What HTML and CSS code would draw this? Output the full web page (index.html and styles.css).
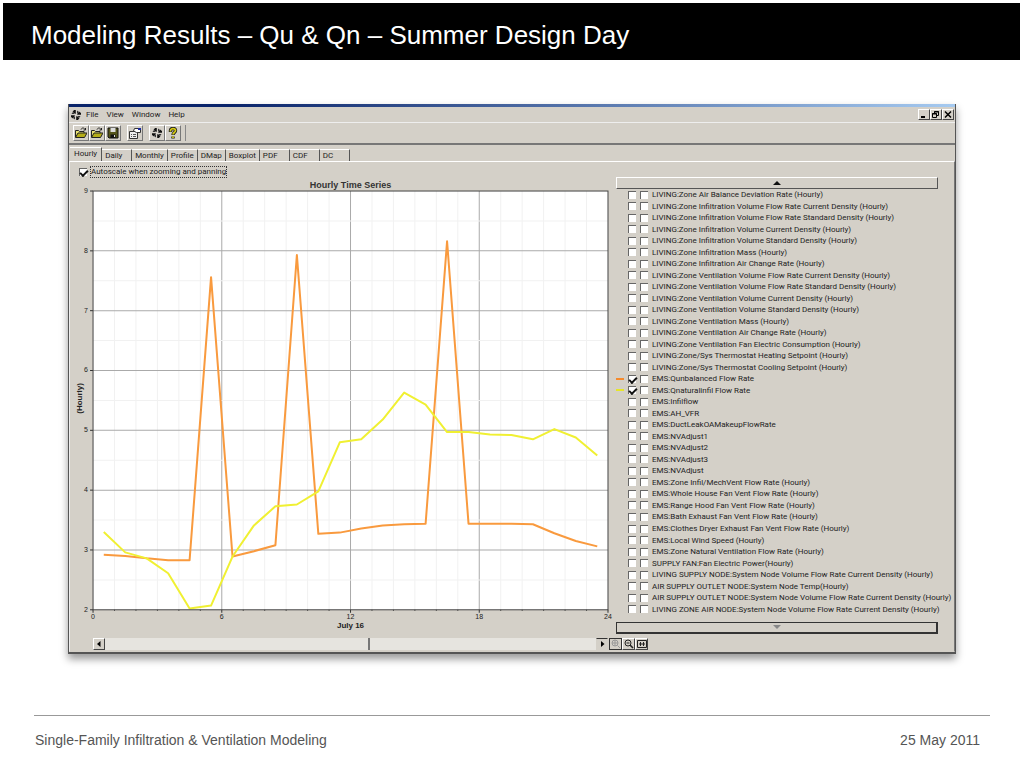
FILE: index.html
```
<!DOCTYPE html>
<html lang="en">
<head>
  <meta charset="UTF-8">
  <meta name="viewport" content="width=device-width, initial-scale=1.0">
  <title>Modeling Results</title>
  <link rel="stylesheet" href="styles.css">
</head>
<body>

<!-- shared icons -->
<svg class="defs" width="0" height="0" aria-hidden="true">
  <symbol id="logo" viewBox="0 0 12 12">
    <path d="M4 1h1.800v4L2.500 3zM11 4v1.800H7L9 2.500zM8 11H6.200V7l3.300 2zM1 8V6.200h4L3 9.500z" fill="#111"/>
    <path d="M7 1.500L9 3 7 5zM10.500 7L9 9 7 7zM5 10.500L3 9l2-2zM1.500 5L3 3l2 2z" fill="#333"/>
  </symbol>
  <symbol id="open" viewBox="0 0 12 12">
    <path d="M.5 10V3.500h3l1 1H9V6" fill="#e8e070" stroke="#222"/>
    <path d="M.5 10.500L3 6h9l-2.500 4.500z" fill="#b5ad18" stroke="#222"/>
    <path d="M6 2.500C7 .5 9 .5 10 2.500M10.500 1v2H8.500" fill="none" stroke="#222"/>
  </symbol>
</svg>

<header class="slide-title">
  <h1>Modeling Results – Qu &amp; Qn – Summer Design Day</h1>
</header>

<main class="window">
  <div class="title-strip"></div>

  <div class="menu-bar">
    <svg class="app-icon"><use href="#logo"/></svg>
    <nav class="menus">
      <a href="#">File</a>
      <a href="#">View</a>
      <a href="#">Window</a>
      <a href="#">Help</a>
    </nav>
    <div class="window-buttons">
      <button aria-label="Minimize"><svg viewBox="0 0 10 9"><path d="M2 7h4" stroke="#000" stroke-width="2"/></svg></button>
      <button aria-label="Restore"><svg viewBox="0 0 10 9"><path d="M3.500 3V1.500h4v4H6M1.500 3.500h4v4h-4zM3 2h5M1 4h5" fill="none" stroke="#000"/></svg></button>
      <button aria-label="Close"><svg viewBox="0 0 10 9"><path d="M2 1.500l6 6M8 1.500l-6 6" stroke="#000" stroke-width="1.500"/></svg></button>
    </div>
  </div>

  <div class="toolbar">
    <div class="tool-group">
      <button aria-label="Open"><svg><use href="#open"/></svg></button>
      <button aria-label="Open another"><svg><use href="#open"/></svg></button>
      <button aria-label="Save"><svg viewBox="0 0 12 12"><path d="M1 1h10v10H2L1 10z" fill="#55551a" stroke="#111"/><path d="M3.500 1h5v4h-5z" fill="#ddd"/><path d="M3.500 7.500h5V11h-5z" fill="#111"/><path d="M7 8h1v2H7z" fill="#ddd"/></svg></button>
    </div>
    <div class="tool-group">
      <button aria-label="Properties"><svg viewBox="0 0 12 12"><path d="M.5 4.500h8v7h-8z" fill="#eee" stroke="#333"/><path d="M2 7.500h1M4 7.500h3M2 9.500h1M4 9.500h3" stroke="#555"/><path d="M5.500 1.500h6v4h-4l-3-1.500z" fill="#fff" stroke="#333"/><path d="M9 1h3v2H9z" fill="#1c2aa0"/></svg></button>
    </div>
    <div class="tool-group">
      <button aria-label="About"><svg><use href="#logo"/></svg></button>
      <button aria-label="Help"><svg viewBox="0 0 12 12"><path d="M3.500 5V3.500C3.500 .8 8.500 .8 8.500 3.500 8.500 5.500 6 5.500 6 8M6 9.500v2" fill="none" stroke="#222" stroke-width="3.400"/><path d="M3.500 4.500v-1C3.500 1 8.500 1 8.500 3.500 8.500 5.500 6 5.500 6 7.500M6 9.500v1.500" fill="none" stroke="#d8cc10" stroke-width="1.700"/></svg></button>
    </div>
  </div>

  <div class="tabs" role="tablist">
    <button class="tab active" role="tab">Hourly</button>
    <button class="tab wide" role="tab">Daily</button>
    <button class="tab" role="tab">Monthly</button>
    <button class="tab" role="tab">Profile</button>
    <button class="tab" role="tab">DMap</button>
    <button class="tab" role="tab">Boxplot</button>
    <button class="tab wide" role="tab">PDF</button>
    <button class="tab wide" role="tab">CDF</button>
    <button class="tab wide" role="tab">DC</button>
  </div>

  <div class="panel">
    <section class="chart-side">
      <div class="autoscale">
        <input type="checkbox" id="autoscale" checked>
        <label for="autoscale">Autoscale when zooming and panning</label>
      </div>
      <svg class="chart" id="chart" viewBox="0 0 538 452" role="img" aria-label="Hourly Time Series"></svg>
      <div class="scroll-row">
        <div class="scrollbar">
          <button aria-label="Scroll left"><svg viewBox="0 0 10 10"><path d="M6.500 2v6L3 5z"/></svg></button>
          <div class="track"><div class="thumb"></div></div>
          <button class="flat" aria-label="Scroll right"><svg viewBox="0 0 10 10"><path d="M4 2v6l3.500-3z"/></svg></button>
        </div>
      </div>
      <div class="zoom-buttons">
        <button class="pressed" aria-label="Zoom in"><svg viewBox="0 0 10 10"><path d="M6.500 6.500L9 9M1 4h6M4 1v6" stroke="#999"/><circle cx="4" cy="4" r="3" fill="none" stroke="#999"/></svg></button>
        <button aria-label="Zoom out"><svg viewBox="0 0 10 10"><path d="M6 6l3 3" stroke="#222" stroke-width="1.600"/><path d="M2.500 4h3" stroke="#222"/><circle cx="4" cy="4" r="3" fill="none" stroke="#222"/></svg></button>
        <button aria-label="Fit width"><svg viewBox="0 0 10 10"><path d="M.5 1.500h9v7h-9zM2 5h6M3.500 3v4M6.500 3v4" fill="none" stroke="#222"/></svg></button>
      </div>
    </section>

    <section class="series-side">
      <button class="list-button up" aria-label="Previous variables"><svg viewBox="0 0 8 5"><path d="M4 0l4 4H0z"/></svg></button>
      <ul class="series" id="series"></ul>
      <button class="list-button down" aria-label="Next variables"><svg viewBox="0 0 8 5"><path d="M0 0h8L4 4z"/></svg></button>
    </section>
  </div>
</main>

<footer class="slide-footer">
  <span>Single-Family Infiltration &amp; Ventilation Modeling</span>
  <span>25 May 2011</span>
</footer>

<script>
  const names = [
    'LIVING:Zone Air Balance Deviation Rate (Hourly)',
    'LIVING:Zone Infiltration Volume Flow Rate Current Density (Hourly)',
    'LIVING:Zone Infiltration Volume Flow Rate Standard Density (Hourly)',
    'LIVING:Zone Infiltration Volume Current Density (Hourly)',
    'LIVING:Zone Infiltration Volume Standard Density (Hourly)',
    'LIVING:Zone Infiltration Mass (Hourly)',
    'LIVING:Zone Infiltration Air Change Rate (Hourly)',
    'LIVING:Zone Ventilation Volume Flow Rate Current Density (Hourly)',
    'LIVING:Zone Ventilation Volume Flow Rate Standard Density (Hourly)',
    'LIVING:Zone Ventilation Volume Current Density (Hourly)',
    'LIVING:Zone Ventilation Volume Standard Density (Hourly)',
    'LIVING:Zone Ventilation Mass (Hourly)',
    'LIVING:Zone Ventilation Air Change Rate (Hourly)',
    'LIVING:Zone Ventilation Fan Electric Consumption (Hourly)',
    'LIVING:Zone/Sys Thermostat Heating Setpoint (Hourly)',
    'LIVING:Zone/Sys Thermostat Cooling Setpoint (Hourly)',
    'EMS:Qunbalanced Flow Rate',
    'EMS:Qnaturalinfil Flow Rate',
    'EMS:Infilflow',
    'EMS:AH_VFR',
    'EMS:DuctLeakOAMakeupFlowRate',
    'EMS:NVAdjust1',
    'EMS:NVAdjust2',
    'EMS:NVAdjust3',
    'EMS:NVAdjust',
    'EMS:Zone Infil/MechVent Flow Rate (Hourly)',
    'EMS:Whole House Fan Vent Flow Rate (Hourly)',
    'EMS:Range Hood Fan Vent Flow Rate (Hourly)',
    'EMS:Bath Exhaust Fan Vent Flow Rate (Hourly)',
    'EMS:Clothes Dryer Exhaust Fan Vent Flow Rate (Hourly)',
    'EMS:Local Wind Speed (Hourly)',
    'EMS:Zone Natural Ventilation Flow Rate (Hourly)',
    'SUPPLY FAN:Fan Electric Power(Hourly)',
    'LIVING SUPPLY NODE:System Node Volume Flow Rate Current Density (Hourly)',
    'AIR SUPPLY OUTLET NODE:System Node Temp(Hourly)',
    'AIR SUPPLY OUTLET NODE:System Node Volume Flow Rate Current Density (Hourly)',
    'LIVING ZONE AIR NODE:System Node Volume Flow Rate Current Density (Hourly)'
  ];
  const plotted = {
    'EMS:Qunbalanced Flow Rate': {
      key: 'unbalanced',
      data: [2.92, 2.9, 2.86, 2.83, 2.83, 7.56, 2.89, 2.98, 3.08, 7.93, 3.27, 3.29,
             3.36, 3.41, 3.43, 3.44, 8.16, 3.44, 3.44, 3.44, 3.43, 3.28, 3.15, 3.06]
    },
    'EMS:Qnaturalinfil Flow Rate': {
      key: 'natural',
      data: [3.3, 2.96, 2.86, 2.61, 2.02, 2.07, 2.89, 3.41, 3.73, 3.76, 3.98, 4.8,
             4.85, 5.18, 5.63, 5.43, 4.97, 4.97, 4.93, 4.92, 4.85, 5.02, 4.88, 4.58]
    }
  };

  // Variable list: left axis box, right axis box, name
  document.getElementById('series').innerHTML = names.map((name, i) => {
    const line = plotted[name];
    return `<li>
      <span class="swatch ${line ? line.key : ''}"></span>
      <input type="checkbox" id="left${i}" ${line ? 'checked' : ''}>
      <input type="checkbox" id="right${i}" aria-label="${name}, right axis">
      <label for="left${i}">${name}</label>
    </li>`;
  }).join('');

  // Chart
  const left = 21, top0 = 13, width = 514, height = 418;
  const x = hour => left + width * hour / 24;
  const y = value => top0 + height * (9 - value) / 7;
  let out = `<rect class="plot" x="${left}" y="${top0}" width="${width}" height="${height}"/>`;

  for (let h = 1; h < 24; h++) {
    out += `<path class="${h % 6 ? 'minor' : 'major'}" d="M${x(h)} ${top0}v${height}"/>`;
  }
  for (let v = 2.5; v < 9; v += 0.5) {
    out += `<path class="${v % 1 ? 'minor' : 'major'}" d="M${left} ${y(v)}h${width}"/>`;
  }
  for (let h = 0; h <= 24; h++) {
    out += `<path class="axis" d="M${x(h)} ${top0 + height}v${h % 6 ? 1 : 3}"/>`;
    if (h % 6 === 0) out += `<text x="${x(h)}" y="440" text-anchor="middle">${h}</text>`;
  }
  for (let v = 2; v <= 9; v++) {
    out += `<path class="axis" d="M${left} ${y(v)}h-3"/>`;
    out += `<text x="16" y="${y(v) + 2}" text-anchor="end">${v}</text>`;
  }
  Object.values(plotted).forEach(line => {
    const points = line.data.map((v, i) => `${x(i + 0.5)},${y(v)}`).join(' ');
    out += `<polyline class="line ${line.key}" points="${points}"/>`;
  });
  out += `<rect class="frame" x="${left}" y="${top0}" width="${width}" height="${height}"/>
    <text class="title" x="278" y="10" text-anchor="middle">Hourly Time Series</text>
    <text class="caption" x="278" y="449" text-anchor="middle">July 16</text>
    <text class="caption" transform="translate(10 220) rotate(-90)" text-anchor="middle">(Hourly)</text>`;
  document.getElementById('chart').innerHTML = out;
</script>

</body>
</html>
```
FILE: styles.css
```
* { margin: 0; padding: 0; box-sizing: border-box; }
body {
  background: #fff;
  color: #222;
  font-family: "Liberation Sans", Arial, sans-serif;
  overflow-x: hidden;
}
button { font: inherit; color: inherit; border: none; background: #d4d0c8; }
.defs { position: absolute; }

.slide-title {
  margin: 3px 4px 0 3px;
  padding: 18px 28px 11px;
  background: #000;
  color: #fff;
}
.slide-title h1 { font-size: 26px; line-height: 28px; font-weight: normal; }

/* Application window */
.window {
  margin: 44px 68px 0;
  background: #d4d0c8;
  border: 1px solid #555;
  border-top: none;
  border-bottom-width: 2px;
  box-shadow: 0 5px 8px rgba(0, 0, 0, 0.4);
  font-family: Roboto, "Liberation Sans", sans-serif;
  font-size: 8px;
  line-height: 11px;
}
.title-strip { height: 3px; background: linear-gradient(to right, #0a246a 18%, #a6caf0); }

.menu-bar { display: flex; align-items: center; height: 15px; padding: 0 1px; }
.app-icon { width: 12px; height: 12px; }
.menus { display: flex; gap: 8px; margin-left: 4px; }
.menus a { color: #222; text-decoration: none; }
.window-buttons { display: flex; margin-left: auto; }
.window-buttons button {
  width: 12px; height: 11px;
  border: 1px solid; border-color: #fff #444 #444 #fff;
}
.window-buttons svg { display: block; width: 10px; height: 9px; }

.toolbar {
  display: flex; gap: 6px;
  height: 23px; padding: 2px 4px;
  border-top: 1px solid #eee;
  border-bottom: 2px solid #777;
}
.tool-group { display: flex; }
.tool-group:last-child { padding-right: 4px; border-right: 1px solid #888; }
.toolbar button {
  width: 16px; height: 16px; padding: 1px;
  border: 1px solid; border-color: #fff #777 #777 #fff;
}
.toolbar svg { display: block; width: 12px; height: 12px; }

.tabs { display: flex; align-items: flex-end; height: 16px; padding-left: 1px; }
.tab {
  height: 12px; padding: 0 3px;
  border-top: 1px solid #fff;
  border-right: 1px solid #555;
}
.tab.active { height: 14px; padding: 0 4px 2px; }
.tab.wide { min-width: 30px; text-align: left; }

.panel {
  display: grid;
  grid-template-columns: minmax(0, 1.6fr) minmax(0, 1fr);
  border: 1px solid; border-color: #fff #777 #d4d0c8 #eee;
}

.chart-side { position: relative; padding: 3px 3px 1px 2px; }
.autoscale { display: flex; align-items: center; gap: 4px; height: 13px; padding-left: 7px; }
.autoscale label { outline: 1px dotted #333; line-height: 10px; }

input[type='checkbox'] {
  appearance: none;
  flex: none;
  width: 8px; height: 8px;
  background: #fff;
  border-top: 1px solid #666;
  border-left: 1px solid #666;
}
input[type='checkbox']:checked::after {
  content: '';
  display: block;
  width: 6px; height: 3px;
  border: solid #111;
  border-width: 0 0 2px 2px;
  transform: translateY(1px) rotate(-45deg);
}

.chart { display: block; width: 100%; overflow: visible; }
.chart text { font-family: "Liberation Sans", Arial, sans-serif; font-size: 7px; fill: #222; }
.chart .title { font-size: 9px; font-weight: bold; fill: #333; }
.chart .caption { font-size: 8px; font-weight: bold; }
.plot { fill: #fff; }
.frame { fill: none; stroke: #444; }
.minor { stroke: #f1f1f1; }
.major { stroke: #aaa; }
.axis { stroke: #333; }
.line { fill: none; stroke-width: 2; stroke-linejoin: round; }
.line.unbalanced { stroke: #f99a3e; }
.line.natural { stroke: #f0f032; }

.scroll-row { padding: 7px 3px 0 21px; }
.scrollbar { display: flex; height: 12px; }
.scrollbar button {
  width: 12px;
  border: 1px solid; border-color: #fff #444 #444 #fff;
}
.scrollbar .flat { border-color: #333 #d4d0c8 #d4d0c8; }
.scrollbar svg { display: block; width: 10px; height: 10px; }
.track { flex: 1; background: #e6e4df; }
.thumb { width: 54%; height: 12px; border-right: 2px solid #777; }
.zoom-buttons { position: absolute; right: -34px; bottom: 1px; display: flex; }
.zoom-buttons button {
  width: 13px; height: 12px;
  border: 1px solid; border-color: #fff #444 #444 #fff;
}
.zoom-buttons .pressed { border-color: #333; }
.zoom-buttons svg { display: block; width: 10px; height: 10px; margin: auto; }

/* Variable list */
.series-side { display: flex; flex-direction: column; padding: 15px 16px 17px 2px; }
.list-button {
  display: flex; align-items: center; justify-content: center;
  height: 12px;
  border: 1px solid; border-color: #fff #555 #555 #fff;
}
.list-button.down { border-color: #333; border-width: 1px 2px 2px 1px; }
.list-button svg { width: 8px; height: 5px; fill: #111; }
.list-button.down svg { fill: #888; }
.series {
  flex: 1;
  display: grid; grid-auto-rows: 1fr;
  margin-bottom: 7px;
  list-style: none;
}
.series li { display: flex; align-items: center; gap: 4px; min-width: 0; white-space: nowrap; }
.swatch { flex: none; width: 8px; height: 2px; }
.swatch.unbalanced { background: #f58a2c; }
.swatch.natural { background: #e6e62a; }

.slide-footer {
  display: flex; justify-content: space-between;
  margin: 61px 34px 0;
  padding: 15px 10px 0 1px;
  border-top: 1px solid #999;
  font-size: 14px; line-height: 18px;
  color: #555;
}
```
